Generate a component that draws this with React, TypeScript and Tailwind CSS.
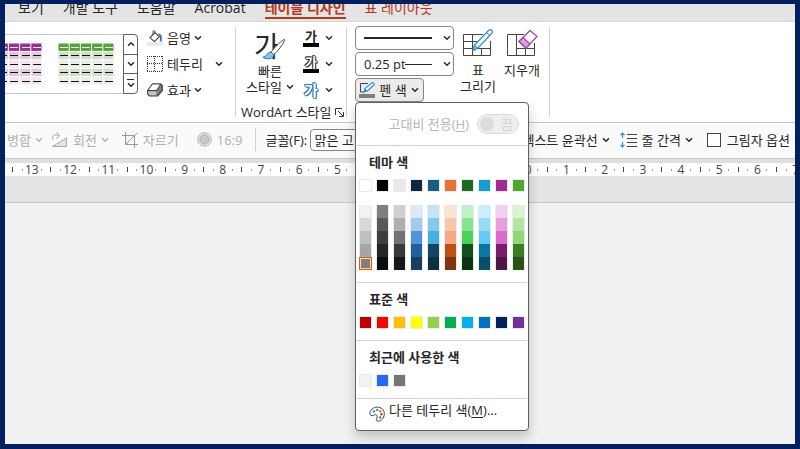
import { useState } from 'react';
import type { ReactNode } from 'react';
import clsx from 'clsx';

const tabs = ['보기', '개발 도구', '도움말', 'Acrobat', '테이블 디자인', '표 레이아웃'];

const themeColors = ['#ffffff', '#000000', '#e8e8e8', '#0e2841', '#156082', '#e97132', '#196b24', '#0f9ed5', '#a02b93', '#4ea72e'];

const tintColors = [
  ['#f2f2f2', '#d8d8d8', '#bfbfbf', '#a5a5a5', '#7f7f7f'],
  ['#7f7f7f', '#595959', '#3f3f3f', '#262626', '#0c0c0c'],
  ['#d0d0d0', '#aeaeae', '#747474', '#3a3a3a', '#171717'],
  ['#dce9f7', '#a6c9ec', '#4e95d9', '#215f9a', '#163e64'],
  ['#c1e5f5', '#83caeb', '#46b1e1', '#104861', '#0b3041'],
  ['#fbe3d6', '#f6c6ad', '#f2aa84', '#c04f15', '#80350e'],
  ['#c1f1c8', '#84e291', '#47d45a', '#12501a', '#0c3511'],
  ['#caeefb', '#95dcf7', '#61cbf4', '#0b769f', '#074f6a'],
  ['#f2cfee', '#e59fdd', '#d86dcd', '#78206e', '#501549'],
  ['#d9f2d0', '#b4e5a2', '#8ed973', '#3a7d22', '#275317'],
];

const standardColors = ['#c00000', '#ff0000', '#ffc000', '#ffff00', '#92d050', '#00b050', '#00b0f0', '#0070c0', '#002060', '#7030a0'];
const recentColors = ['#f2f2f2', '#256af4', '#757575'];

const rulerMarks = [13, 12, 11, 10, 9, 8, 7, 6, 5, 4, 3, 2, 1, 0, 1, 2, 3, 4, 5, 6, 7];

function Chevron({ className }: { className?: string }) {
  return (
    <svg width="8" height="6" viewBox="0 0 8 6" className={clsx('shrink-0', className)} aria-hidden="true">
      <path d="M1 1.2 4 4.2 7 1.2" fill="none" stroke="currentColor" strokeWidth="1.4" />
    </svg>
  );
}

function TableThumb({ head, odd, even }: { head: string; odd: string; even: string }) {
  const fills = [head, odd, even, odd, even];
  return (
    <svg width="56" height="42" viewBox="0 0 56 42" className="shrink-0" aria-hidden="true">
      {fills.map((fill, r) =>
        [0, 1, 2, 3, 4].map((c) => (
          <g key={`${r}-${c}`}>
            <rect x={c * 11.2 + 0.5} y={r * 8.4 + 0.5} width="10.2" height="7.4" fill={fill} />
            <rect x={Math.round(c * 11.2 + 2)} y={Math.round(r * 8.4 + 4)} width="8" height="1" fill={r === 0 ? '#fff' : '#111'} />
          </g>
        )),
      )}
    </svg>
  );
}

function Divider() {
  return <div className="my-[5px] w-px shrink-0 bg-[#d1d1d1]" />;
}

function FillIcon() {
  return (
    <svg width="16" height="16" viewBox="0 0 16 16" fill="none" aria-hidden="true">
      <path d="M8 2.6 3 7.6l4.4 4.1 4.9-4.9z" stroke="#444" strokeWidth="1.1" />
      <path d="M6 5V1.5c0-1 2-1 2 0v1.2" stroke="#444" />
      <path d="M11.5 4.2c2.5.6 3 3 2.2 7.3" stroke="#1f78c1" strokeWidth="1.8" />
      <rect y="12" width="16" height="4" fill="#ececec" />
    </svg>
  );
}

function BorderIcon() {
  return (
    <svg width="16" height="16" viewBox="0 0 16 16" fill="none" aria-hidden="true">
      <path d="M0 .5h16M0 7.5h16M0 15.5h16M.5 0v16M7.5 0v16M15.5 0v16" stroke="#333" strokeDasharray="1 1" />
    </svg>
  );
}

function EffectIcon() {
  return (
    <svg width="16" height="16" viewBox="0 0 16 16" fill="none" strokeLinejoin="round" aria-hidden="true">
      <path d="M5.5 2h8.2l1.6 1.5v5L10.5 14h-8L.7 12.2V8.5z" fill="#7d7d7d" stroke="#444" strokeWidth="1.2" />
      <path d="M5.5 2h8.2L9.5 8.5H.7z" fill="#fff" stroke="#444" />
      <path d="M1.3 9.3h8v3.9H2.8l-1.5-1.5z" fill="#c4c4c4" />
    </svg>
  );
}

function BrushIcon({ className }: { className?: string }) {
  return (
    <svg width="24" height="22" viewBox="0 0 24 22" fill="none" className={className} aria-hidden="true">
      <path d="M22.5 1.5C21.5.7 11.5 10 9 14.5l2.5 2.2C15.5 14 23.5 3 22.5 1.5z" fill="#fff" stroke="#444" />
      <path d="M9 14c-4-.2-3.5 4.5-8 5.2 3 2.5 10 2 11-2.2z" fill="#8ec3ef" stroke="#1f78c1" />
    </svg>
  );
}

function DrawTableIcon() {
  return (
    <svg width="32" height="30" viewBox="0 0 32 30" fill="none" aria-hidden="true">
      <path d="M21 6.5H1.5v21h27V13M1.5 13.5H17M1.5 20.5h27M10.5 6.5v21M19.5 20.5v7" stroke="#444" />
      <path d="M11 22.5l1.5-5.5L27 2c1.8-1.2 4.5 1 3 3L16 20z" fill="#fff" stroke="#2b91d9" strokeWidth="1.3" />
      <path d="M11 22.5l1.5-5.5 3.5 3z" fill="#7fbdeb" stroke="#2b91d9" />
      <path d="M24.5 4.5l3 3" stroke="#2b91d9" />
    </svg>
  );
}

function EraserIcon() {
  return (
    <svg width="32" height="30" viewBox="0 0 32 30" fill="none" aria-hidden="true">
      <path d="M18 6.5H1.5v21h27V15M10.5 6.5v21M10.5 20.5h18M19.5 20.5v7" stroke="#444" />
      <path d="M13 13.5 24 2.5l7 6L20 20z" fill="#fff" stroke="#a648ad" strokeWidth="1.3" />
      <path d="M13 13.5l4-4 7 6.5-4 4z" fill="#d9a0dc" stroke="#a648ad" strokeWidth="1.3" />
    </svg>
  );
}

function PenColorIcon() {
  return (
    <svg width="16" height="16" viewBox="0 0 16 16" fill="none" aria-hidden="true">
      <path d="M9 1.5H1.5V10H5" stroke="#444" />
      <path d="M5 10l1-3.5L13 .8c1-.6 2.6.7 2 2L8.5 9z" fill="#fff" stroke="#2b91d9" strokeWidth="1.2" />
      <path d="M5 10l1-3.5L8.5 9z" fill="#2b91d9" />
      <rect y="12" width="16" height="4" fill="#7f7f7f" />
    </svg>
  );
}

function PaletteIcon() {
  return (
    <svg width="16" height="16" viewBox="0 0 16 16" fill="none" aria-hidden="true">
      <path
        d="M.8 6.8C2 2.5 6 .6 9.500 1.2c4 .7 6.2 4 5.8 7.3-.3 3.5-3 6.7-6 6.7-2.3 0-2.3-1.7-1.5-3 .8-1.5.5-3.2-1-3.5-1.6-.3-2 1.3-3.7 1-1.7-.3-2.6-1.5-2.300-2.900z"
        fill="#fff"
        stroke="#444"
      />
      <circle cx="5" cy="5.5" r="1.2" fill="#2b91d9" />
      <circle cx="8.2" cy="4" r="1.2" fill="#4ea72e" />
      <circle cx="11.2" cy="5.3" r="1.2" fill="#e97132" />
      <circle cx="12.5" cy="8.3" r="1.2" fill="#d13438" />
      <circle cx="11.2" cy="11.5" r="1.2" fill="#a648ad" />
    </svg>
  );
}

interface RowButtonProps {
  icon: ReactNode;
  label: string;
  wide?: boolean;
}

function RowButton({ icon, label, wide }: RowButtonProps) {
  return (
    <button type="button" className="flex h-[26px] items-center">
      {icon}
      <span className="ml-1">{label}</span>
      <Chevron className={wide ? 'ml-3' : 'ml-[3px]'} />
    </button>
  );
}

interface SwatchProps {
  color: string;
  stacked?: boolean;
  selected?: boolean;
  onSelect: (color: string) => void;
}

function Swatch({ color, stacked, selected, onSelect }: SwatchProps) {
  return (
    <button
      type="button"
      aria-label={color}
      onClick={() => onSelect(color)}
      className={clsx(
        'block h-[13px] w-[13px]',
        selected
          ? 'border border-[#e8501e] shadow-[inset_0_0_0_1px_#ffe08a]'
          : stacked
            ? 'border-x border-[#ebebeb]'
            : 'border border-[#ebebeb]',
      )}
      style={{ backgroundColor: color }}
    />
  );
}

function MenuHeading({ children }: { children: ReactNode }) {
  return <h2 className="flex h-[33px] items-center pb-0.5 pl-[13px] text-[13px] font-bold">{children}</h2>;
}

function MenuLine() {
  return <div className="mx-px h-px bg-[#d1d1d1]" />;
}

function ColorMenu() {
  const [picked, setPicked] = useState('0-4');

  return (
    <div className="absolute top-full left-0 z-10 w-[174px] rounded-[4px] border border-[#606060] bg-white shadow-[0_6px_12px_rgba(0,0,0,0.2)]">
      <div className="flex h-[42px] items-center justify-end gap-2 pr-[9px] text-[#b5b5b5]">
        <span id="contrast-label">
          고대비 전용(<u className="underline-offset-2">H</u>)
        </span>
        <button
          type="button"
          role="switch"
          aria-checked="false"
          aria-labelledby="contrast-label"
          disabled
          className="flex h-5 w-[42px] items-center justify-between rounded-full border border-[#dadada] bg-[#efefef] pr-[5px] pl-0.5"
        >
          <span className="h-3.5 w-3.5 rounded-full bg-[#dcdcdc]" />
          <span className="text-[#d2d2d2]">끔</span>
        </button>
      </div>
      <MenuLine />
      <MenuHeading>테마 색</MenuHeading>
      <div className="flex gap-1 px-[3px]">
        {themeColors.map((c) => (
          <Swatch key={c} color={c} selected={picked === c} onSelect={setPicked} />
        ))}
      </div>
      <div className="mt-[13px] mb-3 flex gap-1 px-[3px]">
        {tintColors.map((column, i) => (
          <div key={i} className="flex flex-col">
            {column.map((c, j) => (
              <Swatch key={j} color={c} stacked selected={picked === `${i}-${j}`} onSelect={() => setPicked(`${i}-${j}`)} />
            ))}
          </div>
        ))}
      </div>
      <MenuLine />
      <MenuHeading>표준 색</MenuHeading>
      <div className="mb-[11px] flex gap-1 px-[3px]">
        {standardColors.map((c) => (
          <Swatch key={c} color={c} selected={picked === c} onSelect={setPicked} />
        ))}
      </div>
      <MenuLine />
      <MenuHeading>최근에 사용한 색</MenuHeading>
      <div className="mb-[11px] flex gap-1 px-[3px]">
        {recentColors.map((c) => (
          <Swatch key={c} color={c} selected={picked === c} onSelect={setPicked} />
        ))}
      </div>
      <MenuLine />
      <button type="button" className="mb-2 flex h-[23px] w-full items-end gap-1 pl-[13px]">
        <PaletteIcon />
        <span className="pb-0.5">
          다른 테두리 색(<u className="underline-offset-2">M</u>)...
        </span>
      </button>
    </div>
  );
}

function Gallery() {
  return (
    <div className="mt-3 flex h-[60px] w-[133px] shrink-0">
      <div className="flex w-[118px] justify-end gap-4 overflow-hidden border-y border-[#c8c8c8] pt-2 pr-[9px]">
        <TableThumb head="#a02b93" odd="#e0cbdc" even="#f1e8ef" />
        <TableThumb head="#4ea72e" odd="#cfdfca" even="#e9f0e7" />
      </div>
      <div className="flex w-[15px] flex-col divide-y divide-[#606060] rounded-r-[4px] border border-[#606060]">
        <button type="button" aria-label="이전 행" className="flex flex-1 items-center justify-center">
          <Chevron className="rotate-180" />
        </button>
        <button type="button" aria-label="다음 행" className="flex flex-1 items-center justify-center">
          <Chevron />
        </button>
        <button type="button" aria-label="자세히" className="flex flex-1 flex-col items-center justify-center gap-0.5">
          <span className="h-px w-[7px] bg-[#262626]" />
          <Chevron />
        </button>
      </div>
    </div>
  );
}

function Ribbon() {
  return (
    <div className="flex h-[101px] border-b border-[#c6c6c6] bg-white">
      <Gallery />
      <div className="ml-[9px] flex w-[88px] shrink-0 flex-col items-start pt-[3px]">
        <RowButton icon={<FillIcon />} label="음영" />
        <RowButton icon={<BorderIcon />} label="테두리" wide />
        <RowButton icon={<EffectIcon />} label="효과" />
      </div>
      <Divider />

      <div className="flex w-[110px] shrink-0 flex-col">
        <div className="flex pt-[3px]">
          <button type="button" className="ml-[9px] flex w-[50px] flex-col items-center pt-1">
            <span className="relative flex h-[34px] w-8 items-center text-[28px] leading-[34px]">
              가
              <BrushIcon className="absolute top-[9px] left-2" />
            </span>
            <span className="leading-4">빠른</span>
            <span className="flex items-center gap-1 whitespace-nowrap leading-4">
              스타일 <Chevron />
            </span>
          </button>
          <div className="ml-2 flex flex-col">
            <button type="button" className="flex h-[26px] items-center gap-1.5">
              <span className="flex w-4 flex-col items-center border-b-4 border-black text-[13px] leading-[14px] font-bold">가</span>
              <Chevron />
            </button>
            <button type="button" className="flex h-[26px] items-center gap-1.5">
              <span className="flex w-4 flex-col items-center border-b-4 border-black text-[13px] leading-[14px] font-bold text-white [text-shadow:1px_0_#333,-1px_0_#333,0_1px_#333,0_-1px_#333,1px_1px_#333,-1px_-1px_#333]">
                가
              </span>
              <Chevron />
            </button>
            <button type="button" className="flex h-[26px] items-center gap-1.5">
              <span className="w-4 text-center text-[15px] leading-[18px] font-bold text-white [text-shadow:1px_0_#1f78c1,-1px_0_#1f78c1,0_1px_#1f78c1,0_-1px_#1f78c1,1px_1px_#1f78c1,-1px_-1px_#1f78c1]">
                가
              </span>
              <Chevron />
            </button>
          </div>
        </div>
        <div className="flex items-center justify-between pr-0.5 pl-[5px]">
          <span className="leading-[18px] whitespace-nowrap">WordArt 스타일</span>
          <button type="button" aria-label="WordArt 서식">
            <svg width="9" height="9" viewBox="0 0 9 9" fill="none" stroke="#333">
              <path d="M.5 7V.5H7M3 3l5 5M8.5 4v4.5H4" />
            </svg>
          </button>
        </div>
      </div>
      <Divider />

      <div className="ml-2 flex w-[99px] shrink-0 flex-col items-start gap-0.5 pt-1">
        <div className="relative h-6 w-full">
          <select aria-label="펜 스타일" className="h-full w-full appearance-none rounded-[4px] border border-[#868686] bg-white">
            <option />
          </select>
          <span className="pointer-events-none absolute top-[11px] left-[9px] h-0.5 w-[68px] bg-[#262626]" />
          <Chevron className="pointer-events-none absolute top-[9px] right-[3px]" />
        </div>
        <div className="relative h-6 w-full">
          <select
            aria-label="펜 두께"
            className="h-full w-full appearance-none rounded-[4px] border border-[#868686] bg-white pl-2 text-[13px] leading-5"
          >
            <option>0.25 pt</option>
          </select>
          <span className="pointer-events-none absolute top-3 left-[50px] h-px w-[27px] bg-[#262626]" />
          <Chevron className="pointer-events-none absolute top-[9px] right-[3px]" />
        </div>
        <div className="relative">
          <button
            type="button"
            aria-expanded="true"
            className="flex h-6 w-[69px] items-center justify-between rounded-[4px] border border-[#868686] bg-[#ebebeb] pr-1 pl-[3px]"
          >
            <PenColorIcon />
            <span className="whitespace-nowrap">펜 색</span>
            <Chevron />
          </button>
          <ColorMenu />
        </div>
      </div>

      <div className="ml-[3px] flex shrink-0 items-start pt-1.5">
        <button type="button" className="flex w-[42px] flex-col items-center">
          <DrawTableIcon />
          <span className="mt-1 leading-4">
            표<br />
            그리기
          </span>
        </button>
        <button type="button" className="ml-0.5 flex w-[42px] flex-col items-center">
          <EraserIcon />
          <span className="mt-1 leading-4">지우개</span>
        </button>
      </div>
      <div className="ml-1.5 flex">
        <Divider />
      </div>
    </div>
  );
}

function QuickBar() {
  return (
    <div className="flex h-9 items-center overflow-hidden border-b border-[#c6c6c6] bg-[#fafafa] pb-0.5 whitespace-nowrap">
      <button type="button" disabled className="ml-0.5 flex items-center gap-1 text-[#b0b0b0]">
        병합 <Chevron />
      </button>
      <button type="button" disabled className="ml-2 flex items-center gap-1 text-[#b0b0b0]">
        <svg width="17" height="16" viewBox="0 0 17 16" fill="none" stroke="#aaa" className="mr-px">
          <path d="M2.5 8C-.5 3.5 4 1.5 8 4M5.5.5 8.5 4 5 6.5" />
          <path d="M1.5 14.5h14V6z" fill="#e3e3e3" />
        </svg>
        회전 <Chevron />
      </button>
      <button type="button" disabled className="ml-[13px] flex items-center gap-[5px] text-[#b0b0b0]">
        <svg width="16" height="16" viewBox="0 0 16 16" fill="none" stroke="#999">
          <path d="M3.5 0v12.5H16M0 3.5h12.5V16M3.5 12.5 15 1" />
        </svg>
        자르기
      </button>
      <button type="button" disabled className="ml-[18px] flex items-center gap-[5px] text-[#b0b0b0]">
        <svg width="15" height="15" viewBox="0 0 15 15">
          <circle cx="7.5" cy="7.5" r="6.8" fill="#e8e8e8" stroke="#b5b5b5" />
          <circle cx="7.5" cy="7.5" r="4.6" fill="#cacaca" stroke="#aaa" />
        </svg>
        16:9
      </button>
      <div className="ml-[13px] h-[23px] w-px shrink-0 bg-[#d1d1d1]" />
      <label htmlFor="font-name" className="ml-[9px] w-[45px] shrink-0">
        글꼴(F):
      </label>
      <select
        id="font-name"
        className="h-[22px] w-[190px] shrink-0 appearance-none rounded-[4px] border border-[#868686] bg-white pl-[3px] text-[13px] leading-5"
      >
        <option>맑은 고딕</option>
      </select>
      <button type="button" className="ml-[22px] flex items-center gap-1">
        텍스트 윤곽선 <Chevron />
      </button>
      <button type="button" className="ml-2.5 flex items-center gap-1">
        <svg width="17" height="16" viewBox="0 0 17 16" fill="none">
          <path d="M7 2.5h10M7 6.5h10M7 10.5h10M7 14.5h10" stroke="#444" />
          <path d="M2.5 1v5M.5 3l2-2 2 2M2.5 10v5M.5 13l2 2 2-2" stroke="#2b91d9" strokeWidth="1.2" />
        </svg>
        <span className="ml-px">줄 간격</span>
        <Chevron />
      </button>
      <label className="ml-[14px] flex items-center gap-1.5">
        <input type="checkbox" className="h-[14px] w-[14px] shrink-0 appearance-none border border-[#444] bg-white checked:bg-[#444]" />
        그림자 옵션
      </label>
    </div>
  );
}

function Ruler() {
  return (
    <div className="h-[13px] overflow-hidden bg-white text-xs leading-[13px] text-[#444]">
      <div className="-mr-[15px] ml-[3px] flex">
        {rulerMarks.map((n, i) => (
          <div key={i} className="grid flex-1 grid-cols-4 place-items-center">
            <span className="h-[5px] w-px bg-[#444]" />
            <span className="h-0.5 w-px bg-[#999]" />
            <span className="flex w-0 justify-center">{n}</span>
            <span className="h-0.5 w-px bg-[#999]" />
          </div>
        ))}
      </div>
    </div>
  );
}

export default function App() {
  const [active, setActive] = useState('테이블 디자인');

  return (
    <div className="flex min-h-screen flex-col overflow-hidden border-x-[5px] border-t-4 border-b-[5px] border-[#002060] bg-[#f1f1f1] font-['Open_Sans','Noto_Sans_CJK_KR',sans-serif] text-[13px] leading-5 text-[#262626]">
      <nav className="flex h-[18px] items-end gap-[19px] overflow-hidden border-b border-[#d8d8d8] bg-[#e4e4e4] pb-0.5 pl-[13px] text-sm whitespace-nowrap">
        {tabs.map((tab) => (
          <button
            key={tab}
            type="button"
            onClick={() => setActive(tab)}
            className={clsx(
              'border-b-2 pb-0.5 leading-[14px]',
              tab === active ? 'border-[#b7371b] font-bold' : 'border-transparent',
              (tab === active || tab === '표 레이아웃') && 'text-[#b7371b]',
            )}
          >
            {tab}
          </button>
        ))}
      </nav>
      <Ribbon />
      <QuickBar />
      <div className="h-1 bg-[#e0e0e0]" />
      <Ruler />
      <div className="h-[27px] border-b border-[#c6c6c6] bg-[#e4e4e4]" />
      <main className="flex-1" />
    </div>
  );
}
